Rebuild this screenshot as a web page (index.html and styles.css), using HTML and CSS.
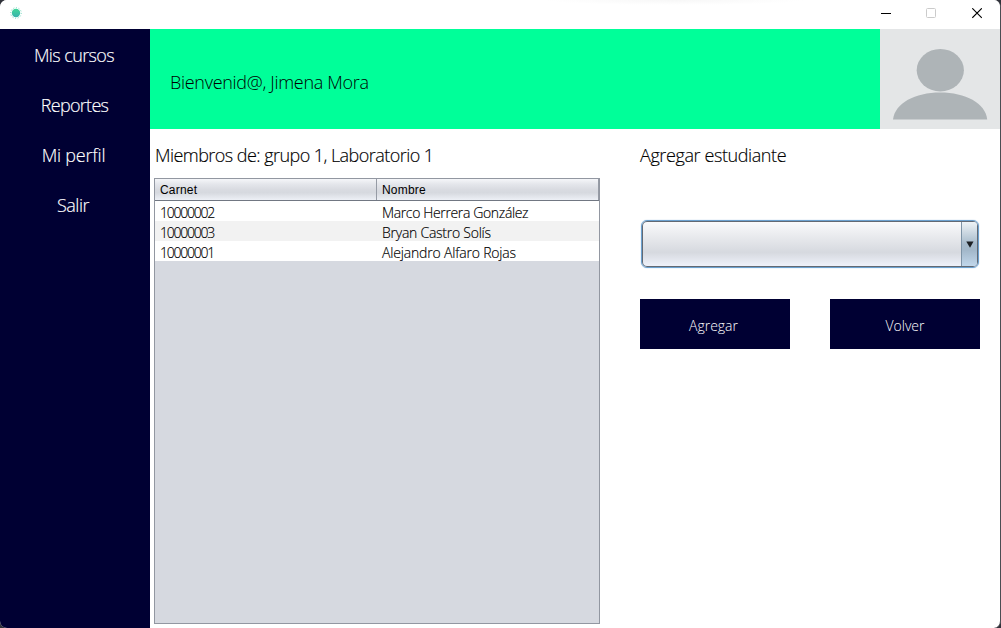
FILE: index.html
```html
<!DOCTYPE html>
<html lang="es">
<head>
<meta charset="utf-8">
<title>Miembros del grupo</title>
<link rel="stylesheet" href="styles.css">
</head>
<body>
<div class="window">
  <header class="titlebar">
    <svg class="app-icon" width="12" height="12" viewBox="0 0 12 12">
      <defs><linearGradient id="g" x1="0" y1="0" x2="0" y2="1"><stop offset="0" stop-color="#3ed598"/><stop offset="1" stop-color="#38b2ae"/></linearGradient></defs>
      <circle cx="6" cy="6" r="5.3" fill="none" stroke="#62d3b4" stroke-width="0.9" stroke-dasharray="1 1.7"/>
      <circle cx="6" cy="6" r="4.2" fill="url(#g)"/>
    </svg>
    <div class="controls">
      <svg width="11" height="11" viewBox="0 0 11 11"><path d="M1 5.5h10" stroke="#000"/></svg>
      <svg width="11" height="11" viewBox="0 0 11 11"><rect x="0.5" y="0.500" width="9" height="9" rx="1" fill="none" stroke="#cbcbcb"/></svg>
      <svg width="11" height="11" viewBox="0 0 11 11"><path d="M0.3 0.300l9.500 9.500M9.800 0.300l-9.500 9.500" stroke="#000" stroke-width="1.1"/></svg>
    </div>
  </header>
  <div class="body">
    <nav class="sidebar">
      <a class="nav-item">Mis cursos</a>
      <a class="nav-item nav-reports">Reportes</a>
      <a class="nav-item nav-profile">Mi perfil</a>
      <a class="nav-item nav-exit">Salir</a>
    </nav>
    <main class="main">
      <section class="banner">
        <p class="welcome">Bienvenid@, Jimena Mora</p>
        <svg class="avatar" width="120" height="100" viewBox="0 0 120 100">
          <ellipse cx="60.3" cy="41.2" rx="23.6" ry="21.2"/>
          <path d="M13 90.5C15 74 35 63.5 60.2 63.5S105.500 74 107.200 90.500Z"/>
        </svg>
      </section>
      <div class="content">
        <section class="members">
          <h1 class="heading">Miembros de: grupo 1, Laboratorio 1</h1>
          <div class="table">
            <div class="row head"><span>Carnet</span><span>Nombre</span></div>
            <div class="row"><span class="num">10000002</span><span class="n1">Marco Herrera González</span></div>
            <div class="row alt"><span class="num">10000003</span><span class="n2">Bryan Castro Solís</span></div>
            <div class="row"><span class="num">10000001</span><span class="n3">Alejandro Alfaro Rojas</span></div>
          </div>
        </section>
        <section class="add">
          <h2 class="heading add-title">Agregar estudiante</h2>
          <div class="combo"><div class="combo-field"></div><div class="combo-arrow"><svg width="8" height="7" viewBox="0 0 8 7"><path d="M0.300 0.500h7.200L4 6.800Z" fill="#1c2024"/></svg></div></div>
          <div class="buttons"><div class="button b1">Agregar</div><div class="button b2">Volver</div></div>
        </section>
      </div>
    </main>
  </div>
</div>
</body>
</html>
```
FILE: styles.css
```css
* { box-sizing: border-box; }
body { margin: 0; background: #30323a; font-family: "Open Sans", "Noto Sans", sans-serif; font-weight: 300; color: #000; }
.window { width: 1001px; height: 628px; display: flex; flex-direction: column; background: #fff; border-radius: 7px; border-right: 1px solid #4b4d53; overflow: hidden; }
.titlebar { height: 29px; flex: none; display: flex; justify-content: space-between; align-items: flex-start; padding: 7px 17px 0 10px; background: radial-gradient(ellipse 130px 5px at 675px 0, #f7f7f7, #fff); }
.app-icon, .controls svg { display: block; }
.controls { display: flex; gap: 35px; padding-top: 1px; }
.body { flex: 1; display: flex; min-height: 0; }
.sidebar { width: 150px; background: #000033; display: flex; flex-direction: column; padding-top: 1px; }
.nav-item { height: 50px; line-height: 50px; text-align: center; color: #fff; font-size: 18px; padding-right: 2px; letter-spacing: -0.6px; white-space: nowrap; -webkit-text-stroke: 0.15px; }
.nav-reports { letter-spacing: -0.7px; padding-right: 1px; }
.nav-profile { letter-spacing: -0.2px; padding-right: 3px; }
.nav-exit { letter-spacing: -0.5px; padding-right: 4px; }
.main { flex: 1; display: flex; flex-direction: column; }
.banner { height: 100px; flex: none; background: #00ff99; display: flex; justify-content: space-between; }
.welcome { margin: 0; padding: 40px 0 0 20px; font-size: 18px; line-height: 26px; letter-spacing: -0.3px; }
.avatar { background: #e4e6e7; fill: #aeb4b7; display: block; }
.content { flex: 1; display: flex; }
.members { width: 446px; margin-left: 4px; display: flex; flex-direction: column; padding-bottom: 4px; }
.heading { margin: 0; height: 49px; padding: 13px 0 0 1px; font-size: 18px; font-weight: 300; line-height: 26px; letter-spacing: -0.55px; white-space: nowrap; -webkit-text-stroke: 0.15px; }
.table { flex: 1; background: #d6d9e0; border: 1px solid #9297a1; }
.row { display: grid; grid-template-columns: 222px 222px; height: 20px; background: #fff; font-size: 14px; line-height: 24px; white-space: nowrap; -webkit-text-stroke: 0.15px; }
.row span { padding-left: 5px; height: 20px; }
.num { letter-spacing: -1.25px; }
.n1 { letter-spacing: -0.36px; }
.n2 { letter-spacing: -0.25px; }
.n3 { letter-spacing: -0.18px; }
.alt { background: #f2f2f2; }
.head { height: 22px; font-family: "Liberation Sans", sans-serif; font-weight: 400; font-size: 12px; line-height: 22px; -webkit-text-stroke: 0; border-bottom: 1px solid #717782; background: linear-gradient(#f5f6f9, #e4e6eb 25%, #d9dbe1 50%, #d6d9df 65%, #edf0f6 100%); }
.row.head span { height: 21px; border-right: 1px solid #969ba5; letter-spacing: 0.2px; }
.add { width: 340px; margin-left: 40px; }
.add-title { height: 91px; padding-left: 0; letter-spacing: -0.4px; }
.combo { height: 48px; margin: 0 1px; border: 1px solid #6ca1cf; border-radius: 6px; box-shadow: inset 0 0 0 1px #626973, 0 0 1px #73a4d1; display: flex; padding: 1px; background: linear-gradient(#fbfbfc, #d6d9df 68%, #f0f3fc); }
.combo-field { flex: 1; }
.combo-arrow { width: 16px; border-left: 1px solid #7d93a6; border-radius: 0 3px 3px 0; display: flex; align-items: center; justify-content: center; background: linear-gradient(#eef3f6, #a6bacb 50%, #a3b8ca 65%, #c1d7eb); }
.buttons { display: flex; gap: 40px; margin-top: 31px; }
.button { width: 150px; height: 50px; line-height: 54px; background: #000033; color: #fff; text-align: center; font-size: 14px; padding-right: 3px; }
.b2 { padding-right: 0; }
```
